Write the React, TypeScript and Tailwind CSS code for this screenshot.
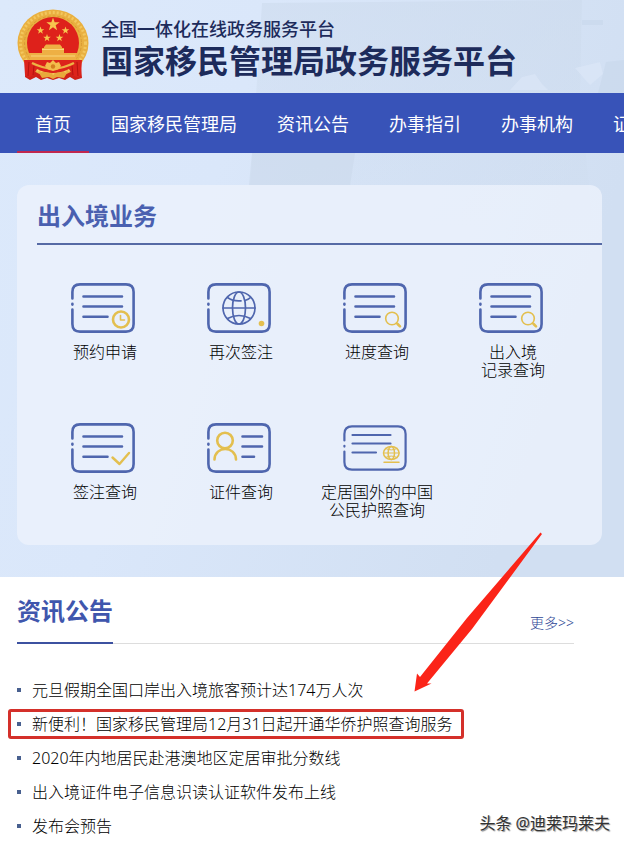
import type { ReactNode } from "react";

const navItems = ["首页", "国家移民管理局", "资讯公告", "办事指引", "办事机构", "证件查询"];

const news = [
  "元旦假期全国口岸出入境旅客预计达174万人次",
  "新便利！国家移民管理局12月31日起开通华侨护照查询服务",
  "2020年内地居民赴港澳地区定居审批分数线",
  "出入境证件电子信息识读认证软件发布上线",
  "发布会预告",
];

const BLUE = "#4f66ae";
const GOLD = "#e3bf4f";

function starPoints(cx: number, cy: number, r: number) {
  return Array.from({ length: 10 }, (_, i) => {
    const radius = i % 2 === 0 ? r : r * 0.4;
    const angle = (Math.PI / 5) * i - Math.PI / 2;
    return `${(cx + radius * Math.cos(angle)).toFixed(2)},${(cy + radius * Math.sin(angle)).toFixed(2)}`;
  }).join(" ");
}

function Emblem() {
  return (
    <svg viewBox="0 0 72 72" className="h-[72px] w-[72px] shrink-0" role="img" aria-label="国徽">
      <path d="M9 49 L63 49 L65 69 L58 71 L53 68 L48 71 L42 69 L36 71 L30 69 L24 71 L19 68 L13 71 L8 68 Z" fill="#cf2018" />
      <ellipse cx="36" cy="34" rx="35.5" ry="33.5" fill="#e9b040" />
      <ellipse cx="36" cy="34" rx="32.5" ry="30.5" fill="none" stroke="#f3c75e" strokeWidth="3" strokeDasharray="2 2" />
      <ellipse cx="36" cy="34" rx="28.5" ry="27" fill="none" stroke="#d99a34" strokeWidth="1" strokeDasharray="3 2" />
      <circle cx="36" cy="34" r="26" fill="#de211b" />
      <g fill="#f7c64e">
        <polygon points={starPoints(36, 15.5, 7)} />
        <polygon points={starPoints(23.5, 21.5, 4)} />
        <polygon points={starPoints(48.5, 21.5, 4)} />
        <polygon points={starPoints(30, 29, 4)} />
        <polygon points={starPoints(42.5, 29, 4)} />
      </g>
      <path d="M27 38 L29 35.5 H43 L45 38 V39 H47 V44 H60 L59 51 H13 L12 44 H25 V39 H27 Z" fill="#eeb044" />
      <path d="M25 40.5 H47 M14 47 H58" stroke="#f9d67b" strokeWidth="1" />
      <path d="M7 51 H65 L64 66 Q60 70 56 66 L52 60 Q36 68 20 60 L16 66 Q12 70 8 66 Z" fill="#dc231b" />
      <path d="M12 53 L11 67 M60 53 L61 67 M17 57 L16 66 M55 57 L56 66" stroke="#b5130f" strokeWidth="1" />
      <path d="M15 54 Q25 59 36 60 Q47 59 57 54" fill="none" stroke="#edb344" strokeWidth="2.5" />
      <path d="M28 57 L30 53 L33 54 L36 51 L39 54 L42 53 L44 57 L41 60.5 L36 62 L31 60.5 Z" fill="#f3bd4c" />
      <path d="M22 64 Q30 61 36 66 Q42 61 50 64 L47 69 L40 68 L36 70 L32 68 L25 69 Z" fill="#e8a93b" />
      <circle cx="36" cy="57.5" r="2.2" fill="#d3801f" />
    </svg>
  );
}

function CardIcon({ top = 1, bottom = 49, width = 2.6, children }: { top?: number; bottom?: number; width?: number; children: ReactNode }) {
  return (
    <svg viewBox="0 0 64 50" className="mr-1 h-[50px] w-16" fill="none" stroke={BLUE} strokeWidth={width} strokeLinecap="round" strokeLinejoin="round" aria-hidden="true">
      <path d={`M1.4 ${top + 14.5} V${top + 8} Q1.4 ${top + 0.4} 9 ${top + 0.4} H55 Q62.6 ${top + 0.4} 62.6 ${top + 8} V${bottom - 8} Q62.6 ${bottom - 0.4} 55 ${bottom - 0.4} H9 Q1.4 ${bottom - 0.4} 1.4 ${bottom - 8} V${top + 25.5}`} />
      <path d={`M1.4 ${top + 19.8} V${top + 20.6}`} />
      {children}
    </svg>
  );
}

function TextLines() {
  return <path d="M12.5 13.5 H51 M12.5 23.5 H51 M12.5 33.8 H36.5" />;
}

function ClockCardIcon() {
  return (
    <CardIcon>
      <TextLines />
      <circle cx="50" cy="36.5" r="9.6" fill="#e9effb" stroke="none" />
      <circle cx="50" cy="36.5" r="8" stroke={GOLD} strokeWidth="2.6" />
      <path d="M49.5 32.5 V37 H53.5" stroke={GOLD} strokeWidth="1.6" />
    </CardIcon>
  );
}

function GlobeCardIcon() {
  return (
    <CardIcon>
      <g strokeWidth="1.7">
        <circle cx="32" cy="25" r="16" />
        <ellipse cx="32" cy="25" rx="6.5" ry="16" />
        <path d="M16 25 H48 M20.5 14.5 Q26 18.5 34 17.8 M38 17.5 Q41.5 16.5 43.5 14.5 M20.5 35.5 Q32 29.5 43.5 35.5" />
      </g>
      <circle cx="54.5" cy="40.5" r="2.8" fill={GOLD} stroke="none" />
    </CardIcon>
  );
}

function SearchCardIcon() {
  return (
    <CardIcon>
      <TextLines />
      <circle cx="49" cy="35.5" r="6.3" stroke={GOLD} strokeWidth="1.6" />
      <path d="M53.5 40 L54.3 40.8" stroke={GOLD} strokeWidth="1.6" />
      <path d="M54.6 41 L57 43.4" stroke={GOLD} strokeWidth="2.6" />
    </CardIcon>
  );
}

function CheckCardIcon() {
  return (
    <CardIcon>
      <TextLines />
      <path d="M41.5 34.5 L48.5 41 L58 30" stroke={GOLD} strokeWidth="2.4" />
    </CardIcon>
  );
}

function PersonCardIcon() {
  return (
    <CardIcon>
      <path d="M35.5 13.5 H55 M35.5 23.5 H55 M35.5 33.8 H47" />
      <g stroke={GOLD} strokeWidth="2.6">
        <circle cx="18" cy="17.5" r="7.8" />
        <path d="M7.5 36.5 C8 22.5 28.5 22.5 29 36.5" />
      </g>
    </CardIcon>
  );
}

function PassportCardIcon() {
  return (
    <CardIcon top={3} bottom={47} width={2.2}>
      <path d="M9.5 12 H47.5 M9.5 20.5 H47.5 M9.5 29.5 H33" />
      <g stroke={GOLD} strokeWidth="1.5">
        <ellipse cx="48.3" cy="30" rx="7.8" ry="6.6" />
        <ellipse cx="48.3" cy="30" rx="3.2" ry="6.6" />
        <path d="M40.5 30 H56 M42.5 25.5 Q48.3 28.5 54 25.5 M42.5 34.5 Q48.3 31.5 54 34.5" strokeWidth="1" />
        <path d="M41 39.3 H56" />
      </g>
    </CardIcon>
  );
}

const services: { icon: ReactNode; lines: string[] }[] = [
  { icon: <ClockCardIcon />, lines: ["预约申请"] },
  { icon: <GlobeCardIcon />, lines: ["再次签注"] },
  { icon: <SearchCardIcon />, lines: ["进度查询"] },
  { icon: <SearchCardIcon />, lines: ["出入境", "记录查询"] },
  { icon: <CheckCardIcon />, lines: ["签注查询"] },
  { icon: <PersonCardIcon />, lines: ["证件查询"] },
  { icon: <PassportCardIcon />, lines: ["定居国外的中国", "公民护照查询"] },
];

function Backdrop() {
  return (
    <svg viewBox="0 0 624 577" preserveAspectRatio="none" className="absolute inset-0 -z-10 h-full w-full" aria-hidden="true">
      <defs>
        <linearGradient id="sky" x1="0" y1="0" x2="1" y2="0.3">
          <stop offset="0" stopColor="#dce9fb" />
          <stop offset="0.4" stopColor="#dae7fa" />
          <stop offset="1" stopColor="#d1dff2" />
        </linearGradient>
        <linearGradient id="tower" x1="0" y1="0" x2="0" y2="1">
          <stop offset="0" stopColor="#cddbed" stopOpacity="0.6" />
          <stop offset="1" stopColor="#cddbed" stopOpacity="0" />
        </linearGradient>
      </defs>
      <rect width="624" height="577" fill="url(#sky)" />
      <path d="M262 3 L582 0 L580 93 L600 300 H250 V190 Z" fill="url(#tower)" />
      <path d="M249 185 L252 153 H355 L350 185 Z" fill="#c9d7ea" fillOpacity="0.5" />
      <path d="M582 20 H603 V25 H582 Z M606 62 L624 60 V93 H598 Z" fill="#c8d7eb" fillOpacity="0.6" />
      <path d="M510 90 L522 77 L535 74 L542 84 L548 90 Z M575 68 L590 85 L603 74 L600 62 Z" fill="#dfeafa" fillOpacity="0.5" />
    </svg>
  );
}

export default function App() {
  return (
    <div className="relative overflow-hidden bg-white pb-[2px] font-['Noto_Sans','Noto_Sans_CJK_SC',sans-serif] text-[#333]">
      <div className="relative isolate">
        <Backdrop />
        <header className="flex h-[93px] items-start gap-3 pl-[17px] pt-[9px]">
          <Emblem />
          <div className="whitespace-nowrap pt-2 text-[#1d2b5b]">
            <p className="text-lg/6 font-medium">全国一体化在线政务服务平台</p>
            <h1 className="text-[32px]/[40px] font-bold">国家移民管理局政务服务平台</h1>
          </div>
        </header>

        <nav className="overflow-hidden bg-[#3853b8] pl-[17px]">
          <ul className="flex h-[60px] gap-1">
            {navItems.map((item, i) => (
              <li key={item} className="shrink-0">
                <a
                  href="#"
                  className={`block h-full whitespace-nowrap border-b-2 px-[18px] pt-[17px] text-lg/7 font-normal text-white ${i === 0 ? "border-[#c0264f]" : "border-transparent"}`}
                >
                  {item}
                </a>
              </li>
            ))}
          </ul>
        </nav>

        <main className="pb-8 pl-[17px] pr-[22px] pt-8">
          <section className="h-[360px] rounded-xl bg-[#ebf1fc]/85 pl-5">
            <h2 className="border-b-2 border-[#566aa5] pb-[11px] pt-[15px] text-2xl/8 font-bold text-[#4a60b0]">出入境业务</h2>
            <ul className="grid grid-cols-4 pr-[21px] pt-[38px]">
              {services.map(({ icon, lines }) => (
                <li key={lines.join("")} className="h-[140px]">
                  <a href="#" className="flex flex-col items-center whitespace-nowrap text-center text-base/[18px] font-light text-black">
                    {icon}
                    <span className="pt-[10px]">
                      {lines.map((line) => (
                        <span key={line} className="block">
                          {line}
                        </span>
                      ))}
                    </span>
                  </a>
                </li>
              ))}
            </ul>
          </section>
        </main>
      </div>

      <section className="pl-[17px] pr-[50px] pt-[18px]">
        <div className="flex items-start justify-between">
          <h2 className="h-[49px] border-b-2 border-[#3c51a0] text-2xl/8 font-bold text-[#3f56ad]">资讯公告</h2>
          <div className="h-[49px] grow border-b border-[#dddddd] pt-[18px] text-right text-sm/5">
            <a href="#" className="font-light text-[#2f4796]">
              更多&gt;&gt;
            </a>
          </div>
        </div>
        <ul className="pt-[29px]">
          {news.map((title, i) => (
            <li key={title} className="relative">
              <a href="#" className="flex items-center gap-[11px] whitespace-nowrap text-base/[34px] font-light text-black">
                <span className="h-1 w-1 bg-[#48608f]" />
                {title}
              </a>
              {i === 1 && <span className="pointer-events-none absolute -left-[9px] top-0.5 h-[30px] w-[456px] rounded-[3px] border-3 border-[#d4302a]" />}
            </li>
          ))}
        </ul>
      </section>

      <svg viewBox="0 0 130 162" className="pointer-events-none absolute left-[413px] top-[531px] h-[162px] w-[130px]" aria-hidden="true">
        <path d="M127.5 1.5 L129 3 L59 98 L14 152.5 L18.5 152.5 L1.5 160.5 L4 142.5 L7 146 L54 87 Z" fill="#fb2418" />
      </svg>

      <p className="absolute bottom-2 right-[14px] whitespace-nowrap text-base/7 text-[#333] [text-shadow:-1px_-1px_0_#fff,1px_1px_1px_#888]">头条 @迪莱玛莱夫</p>
    </div>
  );
}
